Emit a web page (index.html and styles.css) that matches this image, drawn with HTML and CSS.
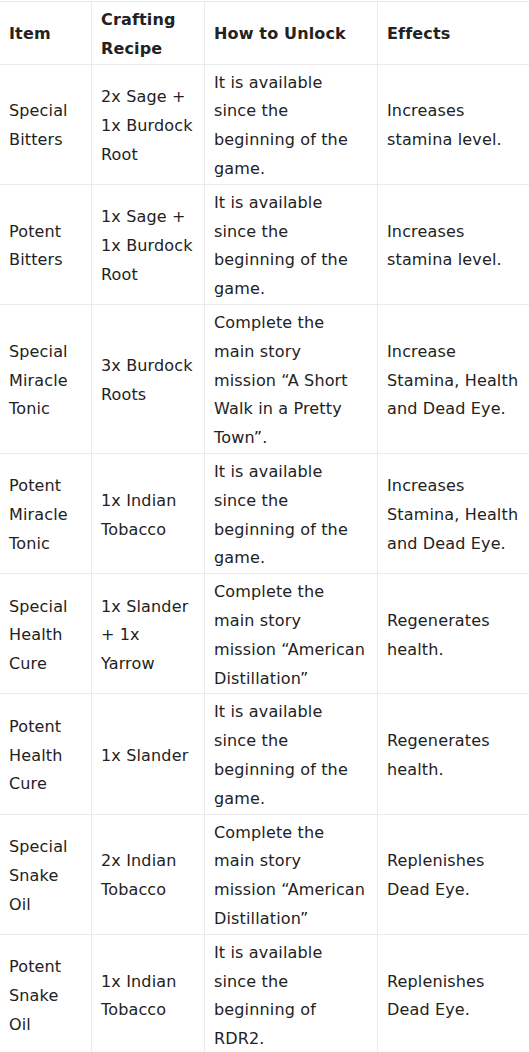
FILE: index.html
```html
<!DOCTYPE html>
<html lang="en">
<head>
<meta charset="utf-8">
<title>Tonics</title>
<link rel="stylesheet" href="styles.css">
</head>
<body>
<table class="tbl">
  <thead>
    <tr>
      <th class="c1">Item</th>
      <th class="c2">Crafting<br>Recipe</th>
      <th class="c3">How to Unlock</th>
      <th class="c4">Effects</th>
    </tr>
  </thead>
  <tbody>
    <tr>
      <td>Special<br>Bitters</td>
      <td>2x Sage +<br>1x Burdock<br>Root</td>
      <td>It is available<br>since the<br>beginning of the<br>game.</td>
      <td>Increases<br>stamina level.</td>
    </tr>
    <tr>
      <td>Potent<br>Bitters</td>
      <td>1x Sage +<br>1x Burdock<br>Root</td>
      <td>It is available<br>since the<br>beginning of the<br>game.</td>
      <td>Increases<br>stamina level.</td>
    </tr>
    <tr>
      <td>Special<br>Miracle<br>Tonic</td>
      <td>3x Burdock<br>Roots</td>
      <td>Complete the<br>main story<br>mission “A Short<br>Walk in a Pretty<br>Town”.</td>
      <td>Increase<br>Stamina, Health<br>and Dead Eye.</td>
    </tr>
    <tr>
      <td>Potent<br>Miracle<br>Tonic</td>
      <td>1x Indian<br>Tobacco</td>
      <td>It is available<br>since the<br>beginning of the<br>game.</td>
      <td>Increases<br>Stamina, Health<br>and Dead Eye.</td>
    </tr>
    <tr>
      <td>Special<br>Health<br>Cure</td>
      <td>1x Slander<br>+ 1x<br>Yarrow</td>
      <td>Complete the<br>main story<br>mission “American<br>Distillation”</td>
      <td>Regenerates<br>health.</td>
    </tr>
    <tr>
      <td>Potent<br>Health<br>Cure</td>
      <td>1x Slander</td>
      <td>It is available<br>since the<br>beginning of the<br>game.</td>
      <td>Regenerates<br>health.</td>
    </tr>
    <tr>
      <td>Special<br>Snake<br>Oil</td>
      <td>2x Indian<br>Tobacco</td>
      <td>Complete the<br>main story<br>mission “American<br>Distillation”</td>
      <td>Replenishes<br>Dead Eye.</td>
    </tr>
    <tr>
      <td>Potent<br>Snake<br>Oil</td>
      <td>1x Indian<br>Tobacco</td>
      <td>It is available<br>since the<br>beginning of<br>RDR2.</td>
      <td>Replenishes<br>Dead Eye.</td>
    </tr>
  </tbody>
</table>
</body>
</html>
```
FILE: styles.css
```css
html, body {
  margin: 0;
  padding: 0;
  background: #fff;
}
body {
  font-family: "DejaVu Sans", Verdana, sans-serif;
  font-size: 16px;
  line-height: 28.8px;
  color: #222;
}
.tbl {
  margin-top: 1px;
  width: 529px;
  table-layout: fixed;
  border-collapse: separate;
  border-spacing: 0;
}
.tbl th,
.tbl td {
  box-sizing: border-box;
  padding: 4px 9px 0;
  text-align: left;
  vertical-align: middle;
  white-space: nowrap;
  letter-spacing: 0.15px;
  border-right: 1px solid #ebebeb;
  border-bottom: 1px solid #ebebeb;
}
.tbl th {
  font-weight: bold;
  border-top: 1px solid #ebebeb;
}
.tbl th:last-child,
.tbl td:last-child {
  border-right: none;
}
.c1 { width: 92px; }
.c2 { width: 113px; }
.c3 { width: 173px; }
.c4 { width: 151px; }
```
